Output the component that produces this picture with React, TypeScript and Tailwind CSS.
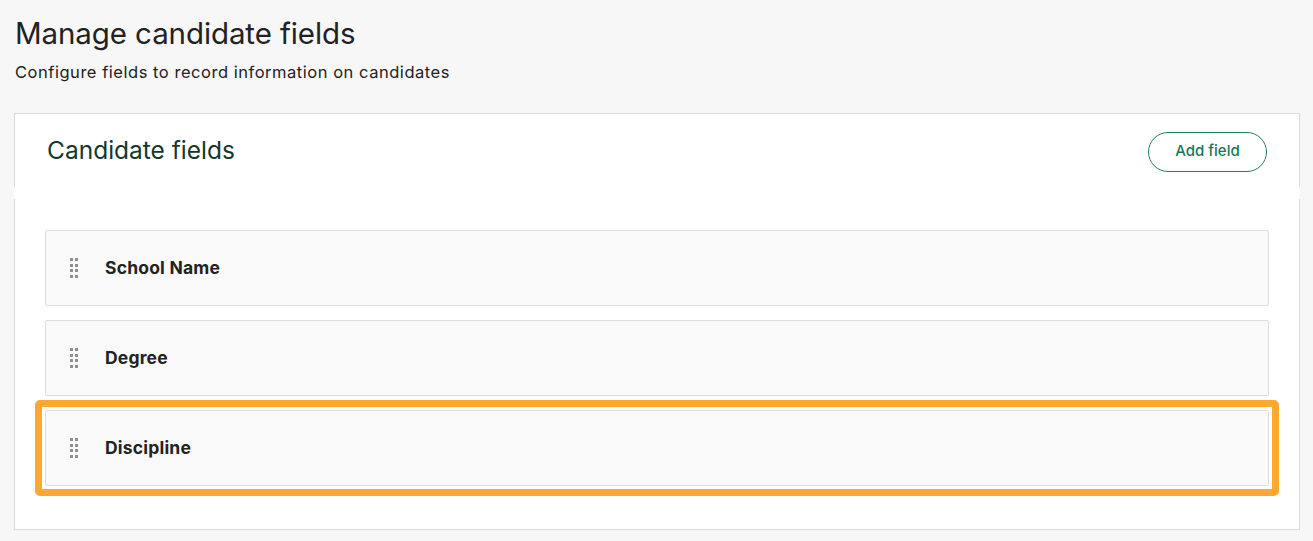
const fields = ["School Name", "Degree", "Discipline"];

function DragHandle() {
  return (
    <div className="grid grid-cols-2 gap-x-[2px] gap-y-[2.5px] w-[8px]">
      {Array.from({ length: 8 }).map((_, i) => (
        <span key={i} className="block w-[3px] h-[3px] bg-[#8f8f8f]" />
      ))}
    </div>
  );
}

export default function App() {
  return (
    <div
      className="min-h-[541px] bg-[#f7f7f7] pl-[14px] pr-[13px] text-[#222]"
      style={{ fontFamily: "Inter, 'Liberation Sans', sans-serif" }}
    >
      {/* Page header */}
      <div className="pt-[14px] pl-[1px]">
        <h1 className="text-[29.5px] leading-[38px] font-normal text-[#222] tracking-[-0.1px]">
          Manage candidate fields
        </h1>
        <p className="mt-[8px] text-[16.5px] leading-[24px] text-[#222] tracking-[0.53px]">
          Configure fields to record information on candidates
        </p>
      </div>

      {/* Card */}
      <div className="mt-[29px] bg-white">
        <div className="flex items-center justify-between h-[74px] border-t border-x border-[#d9d9d9] pl-[32px] pr-[32px]">
          <h2 className="text-[24.5px] font-normal text-[#15372c]">
            Candidate fields
          </h2>
          <button className="mt-[2px] h-[40px] w-[119px] rounded-full border border-[#24805f] text-[#137a55] text-[15px] font-medium">
            Add field
          </button>
        </div>
        <div className="h-[12px] bg-white" />
        <div className="border-x border-b border-[#d9d9d9] px-[30px] pt-[31px] pb-[43px] flex flex-col gap-[14px]">
          {fields.map((f, i) => (
            <div key={f} className="relative">
              <div className="flex items-center h-[76px] bg-[#f9f9f9] border border-[#dedede] rounded-[2px] pl-[24px]">
                <DragHandle />
                <span className="ml-[27px] text-[17.5px] font-bold text-[#222] tracking-[0.2px]">{f}</span>
              </div>
              {i === 2 && (
                <div className="absolute -inset-[10px] border-[7px] border-[#ffa733] rounded-[5px] pointer-events-none" />
              )}
            </div>
          ))}
        </div>
      </div>
    </div>
  );
}
